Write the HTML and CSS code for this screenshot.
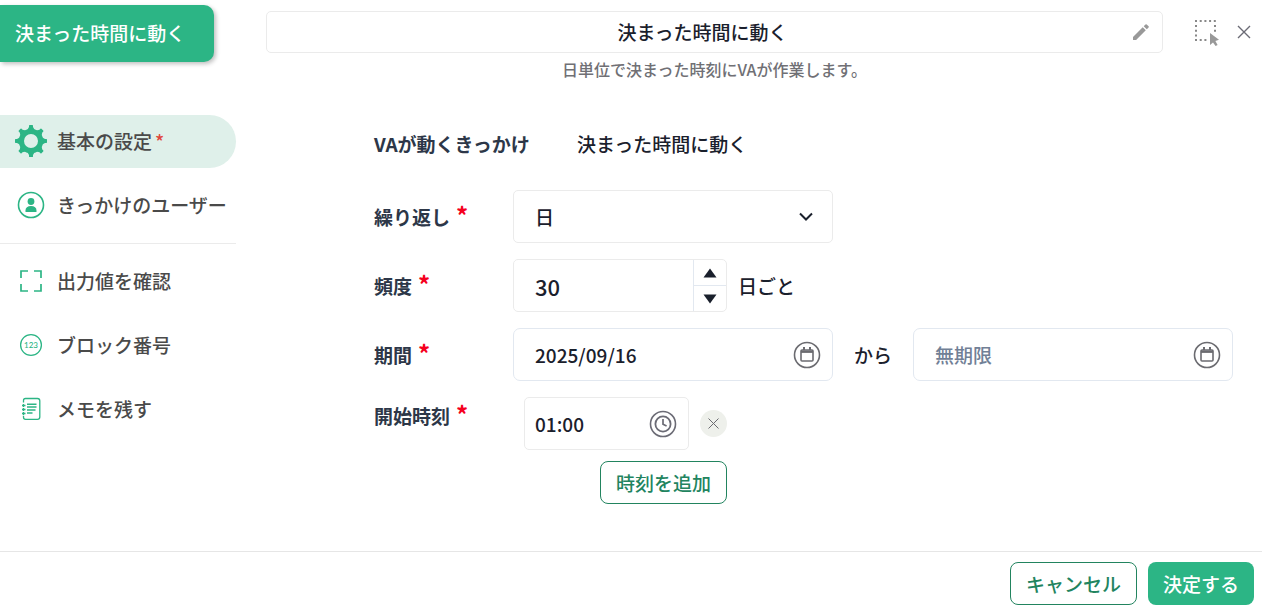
FILE: index.html
```
<!DOCTYPE html>
<html lang="ja">
<head>
    <meta charset="UTF-8">
    <meta name="viewport" content="width=device-width, initial-scale=1.0">
    <title>決まった時間に動く</title>
    <link rel="stylesheet" href="styles.css">
</head>
<body>
    <div class="layout">
        <aside class="sidebar">
            <div class="tag">決まった時間に動く</div>
            <nav class="menu">
                <a href="#basic" class="menu-item active">
                    <svg class="menu-icon" viewBox="0 0 34 34">
                        <g fill="#2cb585">
                            <path id="tooth" d="M13 6.5 L15 3 V1.6 Q15 1 15.8 1 H18.2 Q19 1 19 1.6 V3 L21 6.5 Z"/>
                            <use href="#tooth" transform="rotate(45 17 17)"/>
                            <use href="#tooth" transform="rotate(90 17 17)"/>
                            <use href="#tooth" transform="rotate(135 17 17)"/>
                            <use href="#tooth" transform="rotate(180 17 17)"/>
                            <use href="#tooth" transform="rotate(225 17 17)"/>
                            <use href="#tooth" transform="rotate(270 17 17)"/>
                            <use href="#tooth" transform="rotate(315 17 17)"/>
                        </g>
                        <circle cx="17" cy="17" r="9.6" fill="none" stroke="#2cb585" stroke-width="5.2"/>
                    </svg>
                    <span>基本の設定<span class="menu-required">*</span></span>
                </a>
                <a href="#user" class="menu-item">
                    <svg class="menu-icon" viewBox="0 0 34 34">
                        <circle cx="17" cy="17" r="12.5" fill="none" stroke="#2cb585" stroke-width="1.6"/>
                        <circle cx="17" cy="13.5" r="3.4" fill="#2cb585"/>
                        <path d="M11.5 24 V22.4 C11.5 19.6 13.5 18 17 18 S22.5 19.6 22.5 22.4 V24 Z" fill="#2cb585"/>
                    </svg>
                    <span>きっかけのユーザー</span>
                </a>
                <hr class="menu-divider">
                <a href="#output" class="menu-item">
                    <svg class="menu-icon" viewBox="0 0 34 34" fill="none" stroke="#2cb585" stroke-width="1.7">
                        <path d="M7 14 V7 H14 M20 7 H27 V14 M27 20 V27 H20 M14 27 H7 V20"/>
                    </svg>
                    <span>出力値を確認</span>
                </a>
                <a href="#number" class="menu-item">
                    <svg class="menu-icon" viewBox="0 0 34 34">
                        <circle cx="17" cy="17" r="10.4" fill="none" stroke="#2cb585" stroke-width="1.3"/>
                        <text x="17" y="20" text-anchor="middle" class="menu-icon-text">123</text>
                    </svg>
                    <span>ブロック番号</span>
                </a>
                <a href="#memo" class="menu-item">
                    <svg class="menu-icon" viewBox="0 0 34 34" fill="none" stroke="#2cb585" stroke-width="1.3">
                        <path d="M9.5 10.5 V8.5 Q9.5 6.5 11.5 6.5 H23.5 Q25.8 6.5 25.8 8.8 V25 Q25.8 27.3 23.5 27.3 H11.5 Q9.5 27.3 9.5 25.3 V23.8"/>
                        <path d="M8 13.5 H11.5 M8 17.5 H11.5 M8 21.5 H11.5" stroke-width="1.5"/>
                        <path d="M9.5 12 V15 M9.5 16 V19 M9.5 20 V23"/>
                        <path d="M13 12.3 H22.5 M13 15 H22.5 M13 18 H21.5 M13 21 H18.5" stroke-width="1.4"/>
                    </svg>
                    <span>メモを残す</span>
                </a>
            </nav>
        </aside>

        <main class="main">
            <header class="header">
                <div class="title-area">
                    <div class="title-box">
                        <input type="text" class="title-input" value="決まった時間に動く" aria-label="ブロック名">
                        <svg class="pencil" width="24" height="24" viewBox="0 0 24 24" fill="#999">
                            <path d="M4 16.9 V20 H7.1 L16.8 10.3 L13.7 7.2 Z M19.6 7.5 a0.9 0.9 0 0 0 0-1.2 L17.7 4.4 a0.9 0.9 0 0 0-1.2 0 L14.7 6.2 L17.8 9.3 Z"/>
                        </svg>
                    </div>
                    <p class="description">日単位で決まった時刻にVAが作業します。</p>
                </div>
                <div class="tools">
                    <button type="button" class="icon-button" aria-label="選択">
                        <svg width="26" height="27" viewBox="0 0 26 27">
                            <path d="M1 2 H22" stroke="#888" stroke-width="2" stroke-dasharray="2 2.7"/>
                            <path d="M2 6 V22 M21 6 V13" stroke="#888" stroke-width="2" stroke-dasharray="2 2.8"/>
                            <path d="M1 21 H14" stroke="#888" stroke-width="2" stroke-dasharray="2 2.7"/>
                            <path d="M16 14 V26 L19 23.4 L21.6 27 L23.6 26 L21.4 22 L25 20.8 Z" fill="#999"/>
                        </svg>
                    </button>
                    <button type="button" class="icon-button" aria-label="閉じる">
                        <svg width="14" height="14" viewBox="0 0 14 14" stroke="#6b6b75" stroke-width="1.4">
                            <path d="M1 1 L13 13 M13 1 L1 13"/>
                        </svg>
                    </button>
                </div>
            </header>

            <form class="form" id="settings">
                <div class="row trigger">
                    <span class="label">VAが動くきっかけ</span>
                    <span>決まった時間に動く</span>
                </div>
                <div class="row">
                    <label class="label" for="repeat">繰り返し<span class="required">*</span></label>
                    <div class="field wide select-field">
                        <select id="repeat">
                            <option>日</option>
                        </select>
                        <svg class="chevron" width="16" height="10" viewBox="0 0 16 10" fill="none" stroke="#1a202c" stroke-width="2">
                            <path d="M2 1.5 L8 7.5 L14 1.5"/>
                        </svg>
                    </div>
                </div>
                <div class="row">
                    <label class="label" for="frequency">頻度<span class="required">*</span></label>
                    <div class="field number-field">
                        <input type="text" inputmode="numeric" id="frequency" value="30">
                        <div class="spinner">
                            <button type="button" aria-label="増やす">
                                <svg width="14" height="10" viewBox="0 0 14 10"><path d="M7 0.5 L13.5 9.5 H0.5 Z" fill="#1a202c"/></svg>
                            </button>
                            <button type="button" aria-label="減らす">
                                <svg width="14" height="10" viewBox="0 0 14 10"><path d="M7 9.5 L13.5 0.5 H0.5 Z" fill="#1a202c"/></svg>
                            </button>
                        </div>
                    </div>
                    <span class="unit">日ごと</span>
                </div>
                <div class="row">
                    <label class="label" for="start">期間<span class="required">*</span></label>
                    <div class="field wide date-field">
                        <input type="text" id="start" value="2025/09/16">
                        <svg width="28" height="28" viewBox="0 0 28 28" fill="none" stroke="#6b6b70">
                            <circle cx="14" cy="14" r="12.5" stroke-width="1.6"/>
                            <rect x="8" y="9" width="12" height="11" rx="1" stroke-width="1.6"/>
                            <path d="M8 10.7 H20" stroke-width="2.4"/>
                            <path d="M11 6 V9 M17 6 V9" stroke-width="2"/>
                        </svg>
                    </div>
                    <label class="between" for="end">から</label>
                    <div class="field wide date-field">
                        <input type="text" id="end" placeholder="無期限">
                        <svg width="28" height="28" viewBox="0 0 28 28" fill="none" stroke="#6b6b70">
                            <circle cx="14" cy="14" r="12.5" stroke-width="1.6"/>
                            <rect x="8" y="9" width="12" height="11" rx="1" stroke-width="1.6"/>
                            <path d="M8 10.7 H20" stroke-width="2.4"/>
                            <path d="M11 6 V9 M17 6 V9" stroke-width="2"/>
                        </svg>
                    </div>
                </div>
                <div class="row times-row">
                    <label class="label" for="time">開始時刻<span class="required">*</span></label>
                    <div class="times">
                        <div class="time">
                            <div class="field time-field">
                                <input type="text" id="time" value="01:00">
                                <svg width="28" height="28" viewBox="0 0 28 28" fill="none" stroke="#6b6b75">
                                    <circle cx="14" cy="14" r="12.5" stroke-width="1.6"/>
                                    <circle cx="14" cy="14" r="7.6" stroke-width="1.8"/>
                                    <path d="M14 9 V14.3 L17.6 16" stroke-width="1.7"/>
                                </svg>
                            </div>
                            <button type="button" class="remove" aria-label="削除">
                                <svg width="11" height="11" viewBox="0 0 11 11" stroke="#6b6b70"><path d="M0.5 0.5 L10.5 10.5 M10.5 0.5 L0.5 10.5"/></svg>
                            </button>
                        </div>
                        <button type="button" class="button outline">時刻を追加</button>
                    </div>
                </div>
            </form>
        </main>
    </div>

    <footer class="footer">
        <button type="button" class="button outline">キャンセル</button>
        <button type="submit" form="settings" class="button primary">決定する</button>
    </footer>
</body>
</html>
```

FILE: styles.css
```
* {
    box-sizing: border-box;
}
body {
    margin: 0;
    min-height: 100vh;
    display: flex;
    flex-direction: column;
    font-family: 'Noto Sans CJK JP', sans-serif;
    font-size: 19px;
    font-weight: 500;
    line-height: 28px;
    color: #1a202c;
    background: white;
}
input, select, button {
    font: inherit;
    color: inherit;
    background: none;
    border: none;
    margin: 0;
    padding: 0;
}
input, select {
    width: 100%;
    min-width: 0;
}
button {
    cursor: pointer;
}
svg {
    display: block;
    flex-shrink: 0;
}
.layout {
    flex: 1;
    display: flex;
}

/* sidebar */
.sidebar {
    width: 236px;
    flex-shrink: 0;
    padding-top: 5px;
}
.tag {
    width: 214px;
    height: 57px;
    padding: 14px 15px;
    border-radius: 0 10px 10px 0;
    background: #2cb585;
    color: white;
    box-shadow: 2px 2px 4px rgba(0, 0, 0, 0.25);
}
.menu {
    margin-top: 53px;
    display: flex;
    flex-direction: column;
    gap: 11px;
}
.menu-item {
    height: 53px;
    padding: 0 0 2px 14px;
    display: flex;
    align-items: center;
    gap: 9px;
    border-radius: 0 27px 27px 0;
    color: #4a4a4a;
    text-decoration: none;
    white-space: nowrap;
}
.menu-item.active {
    background: #dff0ea;
}
.menu-icon {
    width: 34px;
    height: 34px;
}
.menu-icon-text {
    font-family: Lato, sans-serif;
    font-size: 8px;
    fill: #2cb585;
}
.menu-required {
    margin-left: 3px;
    color: #e0483e;
}
.menu-divider {
    width: 100%;
    margin: 0;
    border: none;
    border-top: 1px solid #ebebeb;
}

/* header */
.main {
    flex: 1;
    min-width: 0;
}
.header {
    display: flex;
    padding: 11px 11px 0 30px;
    gap: 31px;
}
.title-area {
    flex: 1;
    text-align: center;
}
.title-box {
    height: 42px;
    display: flex;
    align-items: center;
    padding: 0 9px;
    border: 1px solid #ebebeb;
    border-radius: 5px;
}
.title-input {
    text-align: center;
}
.description {
    margin: 2px 0 0;
    font-size: 16px;
    color: #707075;
}
.tools {
    height: 42px;
    display: flex;
    align-items: center;
    gap: 17px;
}

/* form */
.form {
    padding: 35px 29px 24px 138px;
    display: flex;
    flex-direction: column;
    gap: 16px;
}
.row {
    display: flex;
    align-items: center;
    min-height: 53px;
}
.trigger {
    min-height: 56px;
    padding-bottom: 4px;
}
.label {
    width: 139px;
    flex-shrink: 0;
    font-weight: bold;
    color: #2d3748;
}
.trigger .label {
    width: 203px;
}
.required {
    margin-left: 6px;
    font-size: 24px;
    line-height: 24px;
    color: #f5001d;
}
.field {
    height: 53px;
    display: flex;
    align-items: center;
    border: 1px solid #ebebeb;
    border-radius: 5px;
}
.wide {
    width: 320px;
}
.select-field {
    position: relative;
}
.select-field select {
    height: 100%;
    padding: 0 44px 0 21px;
    appearance: none;
}
.chevron {
    position: absolute;
    right: 18px;
    pointer-events: none;
}
.number-field {
    width: 214px;
}
.number-field input {
    padding-left: 21px;
    font-size: 22px;
}
.spinner {
    width: 33px;
    height: 100%;
    flex-shrink: 0;
    display: flex;
    flex-direction: column;
    border-left: 1px solid #e2e8f0;
}
.spinner button {
    flex: 1;
    display: flex;
    align-items: center;
    justify-content: center;
}
.spinner button + button {
    border-top: 1px solid #e2e8f0;
}
.unit {
    margin-left: 11px;
}
.date-field {
    padding: 0 11px 0 21px;
    border-color: #e2e8f0;
    border-radius: 7px;
}
.date-field input::placeholder {
    color: #718096;
    opacity: 1;
}
.between {
    margin: 0 21px;
}
.times-row {
    align-items: flex-start;
}
.times-row .label {
    padding-top: 5px;
}
.times {
    width: 214px;
    display: flex;
    flex-direction: column;
    align-items: flex-end;
    gap: 11px;
}
.time {
    display: flex;
    align-items: center;
    gap: 11px;
}
.time-field {
    width: 165px;
    padding: 0 11px 0 10px;
}
.remove {
    width: 27px;
    height: 27px;
    display: flex;
    align-items: center;
    justify-content: center;
    border-radius: 50%;
    background: #eef0eb;
}

/* buttons */
.button {
    height: 43px;
    padding: 0 15px;
    border-radius: 8px;
    white-space: nowrap;
}
.outline {
    border: 1px solid #22845f;
    color: #22845f;
}
.primary {
    background: #2cb585;
    color: white;
}
.footer {
    display: flex;
    justify-content: flex-end;
    gap: 11px;
    padding: 10px 8px 5px;
    border-top: 1px solid #e6e6e6;
}
```
